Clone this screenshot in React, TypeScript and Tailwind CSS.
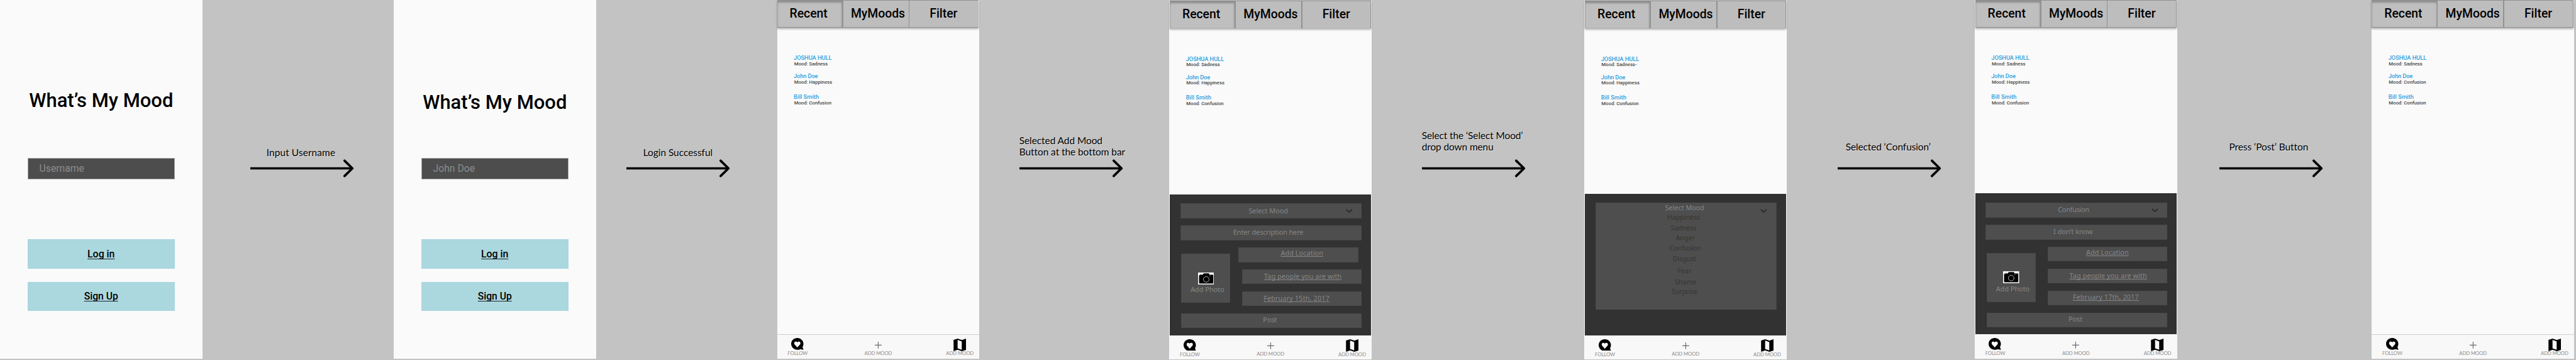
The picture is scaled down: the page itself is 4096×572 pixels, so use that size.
import type { ReactNode } from "react";

type Mood = { name: string; mood: string; gap: string };

const baseMoods: Mood[] = [
  { name: "JOSHUA HULL", mood: "Sadness", gap: "mt-0 tracking-[-0.05px]" },
  { name: "John Doe", mood: "Happiness", gap: "mt-[12.8px] tracking-[-0.15px]" },
  { name: "Bill Smith", mood: "Confusion", gap: "mt-[17.6px] tracking-[0.08px]" },
];

function LoginScreen({ user, titlePad }: { user: string; titlePad: string }) {
  return (
    <section className="flex h-[736px] w-[415px] shrink-0 flex-col bg-[#fafafa] px-[56.5px]">
      <h1 className={`-mx-4 h-[324px] text-center text-[40px] leading-[40px] font-medium whitespace-nowrap ${titlePad}`}>
        What’s My Mood
      </h1>
      <div className="flex h-[43.5px] items-center border border-[#a3a5a3] bg-[#4d4d4d] pl-[23px] text-[20.3px] text-[#8b8c8e]">
        {user}
      </div>
      <a className="mt-[123.3px] flex h-[60.2px] items-center justify-center bg-[#abd7df] text-[20.5px] font-medium underline decoration-[#1d2324] decoration-[1.5px] underline-offset-[2px] [text-decoration-skip-ink:none]">
        Log in
      </a>
      <a className="mt-[27px] flex h-[60.2px] items-center justify-center bg-[#abd7df] text-[20.2px] font-medium underline decoration-[#1d2324] decoration-[1.5px] underline-offset-[2px] [text-decoration-skip-ink:none]">
        Sign Up
      </a>
    </section>
  );
}

function Transition({ width, textPad, arrowPad, lines }: { width: string; textPad: string; arrowPad: string; lines: string[] }) {
  return (
    <div className={`flex shrink-0 flex-col ${width}`}>
      <div className={`flex h-[325px] flex-col justify-end font-['Lato',sans-serif] text-[20px] leading-[24px] whitespace-nowrap [text-shadow:1px_1px_0_rgba(255,255,255,0.6)] ${textPad}`}>
        {lines.map((l) => (
          <p key={l}>{l}</p>
        ))}
      </div>
      <div className={arrowPad}>
        <svg className="block h-[40px] w-[214px]" viewBox="0 0 214 40" fill="none" stroke="#000">
          <path d="M0 20H209" strokeWidth="4.8" />
          <path d="M193.5 4.3L209.5 20L193.5 35.7" strokeWidth="4.8" strokeLinecap="round" strokeLinejoin="round" />
        </svg>
      </div>
    </div>
  );
}

function Tabs({ inset }: { inset: string }) {
  return (
    <div className={`relative mr-px flex h-[57px] shrink-0 gap-[2px] bg-[#919191] pt-px pr-px pb-px text-[25px] font-medium whitespace-nowrap shadow-[0_3px_4px_rgba(0,0,0,0.32)] ${inset}`}>
      <div className="flex w-[133.3px] items-center bg-[#bfbfbf] pb-[2.5px] pl-[25.6px] shadow-[inset_0_4px_4px_#8c8c8c,inset_-1px_0_3px_#b0b0b0]">Recent</div>
      <div className="flex w-[134.3px] items-center bg-[#bdbdbd] pb-[2.5px] pl-[16px]">MyMoods</div>
      <div className="flex flex-1 items-center bg-[#bdbdbd] pb-[2.5px] pl-[41.5px]">Filter</div>
    </div>
  );
}

function FollowIcon() {
  return (
    <svg className="mt-[6.3px] block h-[24.4px] w-[26px]" viewBox="0 0 26 24.4">
      <path d="M12.6 0C19.6 0 25.2 5.4 25.2 12.1c0 2.4-.6 4.5-1.7 6.3c.2 2.2 1.1 4 2.5 5.6c-2.4.2-4.5-.2-6.4-1.2C17.5 23.8 15.1 24.3 12.6 24.3C5.6 24.3 0 18.9 0 12.1S5.6 0 12.6 0z" fill="#000" />
      <path d="M12.6 19.4L7.3 13.7C5.6 11.8 5.9 9 7.7 7.9C9.5 6.8 11.6 7.3 12.6 9.1C13.6 7.3 15.7 6.8 17.5 7.9C19.3 9 19.6 11.8 17.9 13.7z" fill="#fafafa" />
    </svg>
  );
}

function MapIcon() {
  return (
    <svg className="mt-[7px] block h-[25.7px] w-[26.3px]" viewBox="0 0 26 26">
      <path fillRule="evenodd" d="M0 2.6L8.6 0L17.3 2.8L26 0V23.4L17.3 26L8.6 23.2L0 26zM8.4 2.6V20.4L17 23.2V5.8z" fill="#000" />
    </svg>
  );
}

function BottomNav({ line }: { line: string }) {
  return (
    <nav className={`flex h-[50px] shrink-0 border-t bg-[#f8f8f8] font-['Lato',sans-serif] text-[10px] leading-[10px] tracking-[-0.12px] whitespace-nowrap text-[#8c8c8c] ${line}`}>
      <div className="ml-[21px] flex w-[42px] flex-col items-center justify-between pb-[5.2px]">
        <FollowIcon />
        <span>FOLLOW</span>
      </div>
      <div className="ml-[116px] flex w-[57px] flex-col items-center justify-between pb-[5.6px]">
        <svg className="mt-[13.3px] block size-[14px]" viewBox="0 0 14 14" stroke="#6a6a6a" strokeWidth="1.5">
          <path d="M7 0V14M0 7H14" />
        </svg>
        <span>ADD MOOD</span>
      </div>
      <div className="ml-[110.5px] flex w-[57px] flex-col items-center justify-between pb-[5.2px]">
        <MapIcon />
        <span>ADD MOOD</span>
      </div>
    </nav>
  );
}

function AppScreen({ moods, panel, offset = "", tabInset = "", navLine = "border-[#cfcfcf]" }: {
  moods: Mood[];
  panel?: ReactNode;
  offset?: string;
  tabInset?: string;
  navLine?: string;
}) {
  return (
    <section className={`flex h-[736px] w-[415px] shrink-0 flex-col bg-[#fafafa] ${offset}`}>
      <Tabs inset={tabInset} />
      <ul className="flex-1 pt-[55.9px] pl-[34px] leading-[12px] font-medium">
        {moods.map((m) => (
          <li key={m.name} className={m.gap}>
            <p className="text-[12px] text-[#2f9fdf]">{m.name}</p>
            <p className="mt-[0.7px] pl-[0.8px] text-[10px] tracking-normal text-[#484848]">Mood: {m.mood}</p>
          </li>
        ))}
      </ul>
      {panel}
      <BottomNav line={navLine} />
    </section>
  );
}

function Chevron({ className }: { className: string }) {
  return (
    <svg className={`block h-[8px] w-[14px] shrink-0 ${className}`} viewBox="0 0 14 8" fill="none" stroke="#262626" strokeWidth="2.2">
      <path d="M1 1L7 6.5L13 1" />
    </svg>
  );
}

function Camera() {
  return (
    <svg className="ml-[34px] block h-[24.5px] w-[33px]" viewBox="0 0 33 25" preserveAspectRatio="none">
      <rect width="33" height="25" fill="#fff" />
      <path d="M3 5.6Q3 4.7 4 4.7H9.5L11.3 2Q11.6 1.6 12.2 1.6H21.3Q21.9 1.6 22.2 2L23.6 4.7H30Q31.2 4.7 31.2 5.8V21.8Q31.2 23 30 23H3.2Q2 23 2 21.8V6.5z" fill="#000" />
      <path d="M4.6 3.9H8" stroke="#777" strokeWidth="0.9" />
      <circle cx="16.7" cy="14.3" r="5.8" fill="none" stroke="#fff" strokeWidth="0.9" />
      <circle cx="24.3" cy="7.2" r="0.7" fill="#fff" />
    </svg>
  );
}

const field = "flex h-[30.3px] items-center bg-[#4e4e4e] shadow-[inset_0_0_0_1px_#484848]";
const link = "underline decoration-[1px] underline-offset-[1.5px] [text-decoration-skip-ink:none]";

function MoodForm({ mood, moodPad, description, descriptionPad, date, locationBox, datePad }: {
  mood: string;
  moodPad: string;
  description: string;
  descriptionPad: string;
  date: string;
  locationBox: string;
  datePad: string;
}) {
  return (
    <div className="mx-px flex h-[289.3px] shrink-0 flex-col gap-[14.7px] bg-[#323232] pt-[19.3px] pr-[19.2px] pl-[21.3px] font-['Noto_Sans',sans-serif] text-[14px] leading-[16px] whitespace-nowrap text-[#858688]">
      <div className={`${field} pb-[1px] ${moodPad}`}>
        {mood}
        <Chevron className="mr-[18px] ml-auto" />
      </div>
      <div className={`${field} pb-[1.5px] ${descriptionPad}`}>{description}</div>
      <div className="flex items-start justify-between pl-[2px]">
        <div className="mt-[13px] h-[100px] w-[100.7px] bg-[#4e4e4e] pt-[38px] shadow-[inset_0_0_0_1px_#484848]">
          <Camera />
          <p className="mt-[3px] pl-[19.4px]">Add Photo</p>
        </div>
        <div className="flex w-[245.7px] flex-col gap-[14.7px]">
          <div className={`${field} pb-[6px] tracking-[0.12px] ${locationBox}`}>
            <span className={link}>Add Location</span>
          </div>
          <div className={`${field} pb-[2px] pl-[45.3px] tracking-[0.12px]`}>
            <span className={link}>Tag people you are with</span>
          </div>
          <div className={`${field} pb-[2px] tracking-[0.2px] ${datePad}`}>
            <span className={link}>{date}</span>
          </div>
        </div>
      </div>
      <div className={`${field} ml-[2px] pb-[2.5px] pl-[168px]`}>Post</div>
    </div>
  );
}

const options = [
  { label: "Happiness", pos: "mt-[2.6px] pl-[146.7px] tracking-[-0.16px]" },
  { label: "Sadness", pos: "mt-[6px] pl-[154px] tracking-[-0.2px]" },
  { label: "Anger", pos: "mt-[5px] pl-[164.2px]" },
  { label: "Confusion", pos: "mt-[5px] pl-[151.8px] tracking-[-0.28px]" },
  { label: "Disgust", pos: "mt-[6px] pl-[158.3px] tracking-[-0.2px]" },
  { label: "Fear", pos: "mt-[8px] pl-[167.7px]" },
  { label: "Shame", pos: "mt-[7px] pl-[162px]" },
  { label: "Surprise", pos: "mt-[4px] pl-[155.7px] tracking-[-0.2px]" },
];

function MoodDropdown() {
  return (
    <div className="mx-px h-[290.3px] shrink-0 bg-[#323232] pt-[18px] pr-[19px] pl-[21.7px] font-['Noto_Sans',sans-serif] text-[14px] leading-[16px] whitespace-nowrap">
      <div className="flex h-[220px] border-x border-[#464646] bg-[#4e4e4e] pt-[3.3px]">
        <ul className="-ml-px flex-1 text-[#353535]">
          <li className="pl-[142.4px] text-[#858688]">Select Mood</li>
          {options.map((o) => (
            <li key={o.label} className={o.pos}>{o.label}</li>
          ))}
        </ul>
        <Chevron className="mt-[10.5px] mr-[19.5px]" />
      </div>
    </div>
  );
}

export default function App() {
  return (
    <div className="h-[572px] w-[4096px] overflow-hidden bg-[#c3c3c3]">
      <main className="flex h-[739px] w-[5287px] items-start overflow-hidden bg-[#c3c3c3] font-['Roboto',sans-serif] text-black [zoom:0.77474]">
        <LoginScreen user="Username" titlePad="pt-[185.6px]" />
        <Transition width="w-[393px] pt-[0.9px]" textPad="pb-[0.6px] pl-[132px] tracking-[0.08px]" arrowPad="pl-[99px]" lines={["Input Username"]} />
        <LoginScreen user="John Doe" titlePad="pt-[189.6px]" />
        <Transition width="w-[372px]" textPad="pb-[0.7px] pl-[97px] tracking-[-0.05px]" arrowPad="pl-[63px]" lines={["Login Successful"]} />
        <AppScreen moods={baseMoods} />
        <Transition width="w-[390px]" textPad="pb-[1.2px] pl-[82px] tracking-[-0.1px]" arrowPad="pl-[82.6px]" lines={["Selected Add Mood", "Button at the bottom bar"]} />
        <AppScreen
          moods={baseMoods}
          offset="mt-[1.5px]"
          tabInset="ml-px"
          navLine="border-[#f8f8f8]"
          panel={
            <MoodForm
              mood="Select Mood"
              moodPad="pl-[140.4px]"
              description="Enter description here"
              descriptionPad="pl-[108.8px] tracking-[-0.09px]"
              date="February 15th, 2017"
              locationBox="-ml-[7.3px] mr-[7.3px] pl-[86.7px]"
              datePad="pl-[44.2px]"
            />
          }
        />
        <Transition width="w-[437px]" textPad="pb-[11.7px] pl-[103px] tracking-[-0.16px]" arrowPad="pl-[103.8px]" lines={["Select the ‘Select Mood’", "drop down menu"]} />
        <AppScreen
          moods={[{ ...baseMoods[0], mood: "Sadness-" }, baseMoods[1], baseMoods[2]]}
          offset="mt-[1.5px]"
          tabInset="ml-px"
          navLine="border-[#f8f8f8]"
          panel={<MoodDropdown />}
        />
        <Transition width="w-[386px]" textPad="pb-[11.7px] pl-[121px] tracking-[-0.17px]" arrowPad="pl-[104.4px]" lines={["Selected ‘Confusion’"]} />
        <AppScreen
          moods={baseMoods}
          tabInset="ml-px"
          navLine="border-[#f8f8f8]"
          panel={
            <MoodForm
              mood="Confusion"
              moodPad="pl-[148.4px] tracking-[-0.28px]"
              description="I don’t know"
              descriptionPad="pl-[139.4px]"
              date="February 17th, 2017"
              locationBox="pl-[79.5px]"
              datePad="pl-[52.2px]"
            />
          }
        />
        <Transition width="w-[400px]" textPad="pb-[11.7px] pl-[107px] tracking-[-0.1px]" arrowPad="pl-[87.5px]" lines={["Press ‘Post’ Button"]} />
        <AppScreen moods={[baseMoods[0], { ...baseMoods[1], mood: "Confusion" }, baseMoods[2]]} />
      </main>
    </div>
  );
}
